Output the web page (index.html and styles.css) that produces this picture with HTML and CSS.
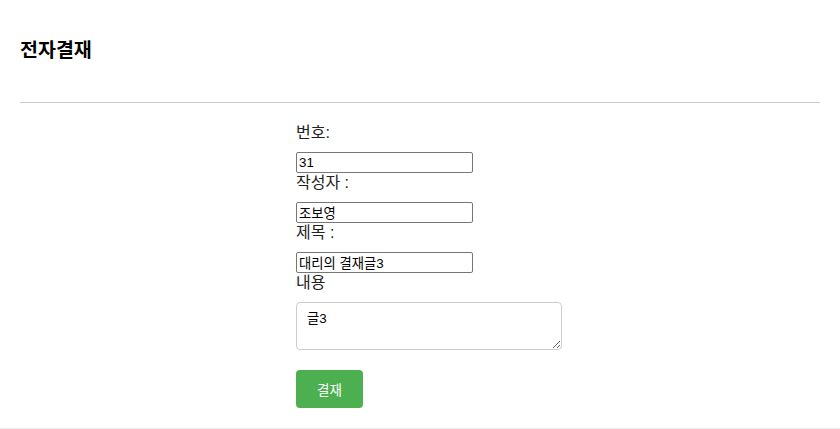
FILE: index.html
```html
<!DOCTYPE html>
<html lang="ko">
<head>
<meta charset="utf-8">
<title>전자결재</title>
<link rel="stylesheet" href="styles.css">
</head>
<body>
<div class="page">
  <header class="header">
    <h3 class="title">전자결재</h3>
  </header>
  <form class="form">
    <label class="label">번호:</label>
    <input class="field" type="text" value="31">
    <label class="label">작성자 :</label>
    <input class="field" type="text" value="조보영">
    <label class="label">제목 :</label>
    <input class="field" type="text" value="대리의 결재글3">
    <label class="label">내용</label>
    <textarea class="content">글3</textarea>
    <button class="submit" type="button">결재</button>
  </form>
  <div class="footer"></div>
</div>
</body>
</html>
```

FILE: styles.css
```css
html, body {
  margin: 0;
  padding: 0;
  background: #fff;
}
body {
  font-family: "Liberation Sans", "Noto Sans CJK KR", sans-serif;
  color: #000;
}
.header {
  margin: 0 20px;
  padding: 38px 0 40px;
  border-bottom: 1px solid #cccccc;
}
.title {
  margin: 0;
  font-size: 19.5px;
  line-height: 24px;
  font-weight: bold;
}
.form {
  display: flex;
  flex-direction: column;
  align-items: flex-start;
  padding: 20px 0 20px 296px;
}
.label {
  display: block;
  font-size: 16px;
  line-height: 20px;
  margin-bottom: 9px;
  color: #222;
}
.field {
  box-sizing: border-box;
  width: 177px;
  height: 21px;
  margin: 0;
  padding: 1px 2px;
  border: 1px solid #767676;
  border-radius: 2px;
  font-family: "Liberation Sans", "Noto Sans CJK KR", sans-serif;
  font-size: 13.33px;
  color: #000;
  background: #fff;
}
.content {
  box-sizing: border-box;
  width: 266px;
  height: 48px;
  margin: 0;
  padding: 8px 10px;
  border: 1px solid #cccccc;
  border-radius: 4px;
  font-family: "Liberation Sans", "Noto Sans CJK KR", sans-serif;
  font-size: 13.33px;
  line-height: 16px;
  color: #000;
}
.submit {
  margin-top: 20px;
  box-sizing: border-box;
  width: 67px;
  height: 38px;
  padding: 0;
  border: none;
  border-radius: 4px;
  background: #4caf50;
  color: #fff;
  font-family: "Liberation Sans", "Noto Sans CJK KR", sans-serif;
  font-size: 13.5px;
}
.footer {
  border-top: 1px solid #eeeeee;
  height: 10px;
}
```
